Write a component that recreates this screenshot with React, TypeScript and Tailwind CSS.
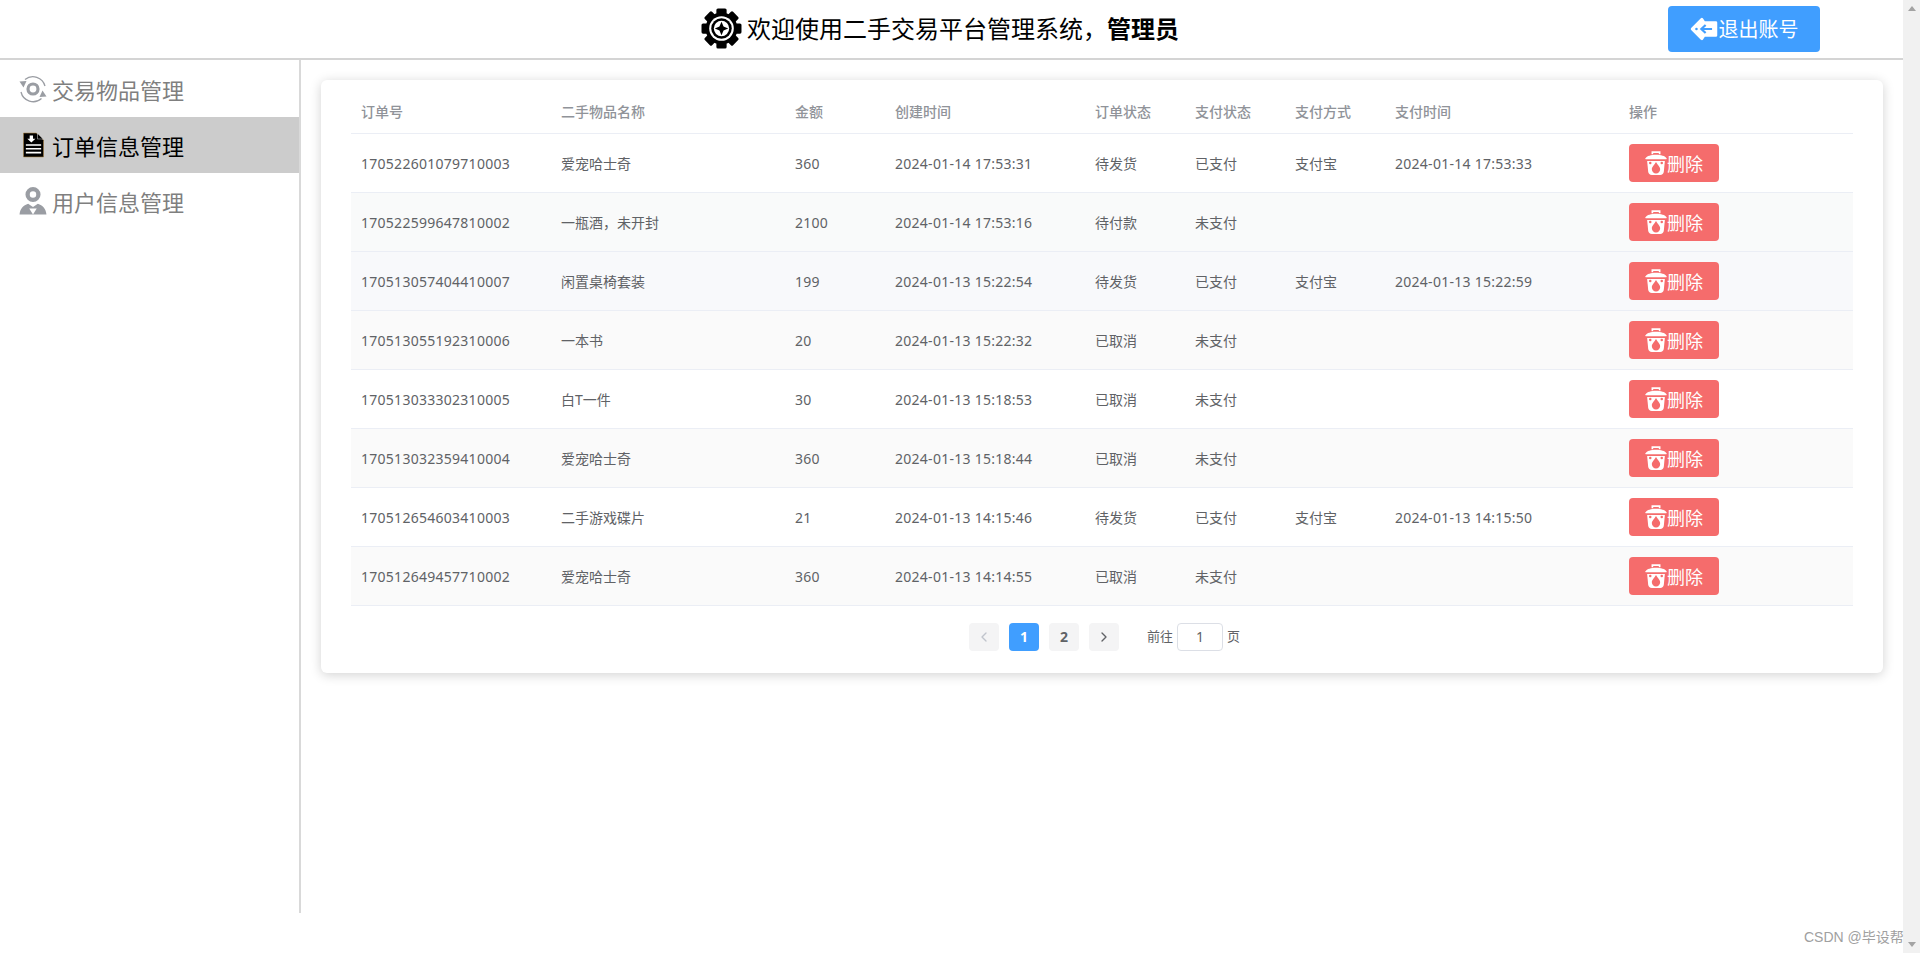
import { ChevronLeft, ChevronRight } from "lucide-react";

type Order = {
  no: string;
  name: string;
  price: string;
  created: string;
  status: string;
  pay: string;
  method?: string;
  paidAt?: string;
  bg?: string;
};

const orders: Order[] = [
  { no: "170522601079710003", name: "爱宠哈士奇", price: "360", created: "2024-01-14 17:53:31", status: "待发货", pay: "已支付", method: "支付宝", paidAt: "2024-01-14 17:53:33", bg: "bg-white" },
  { no: "170522599647810002", name: "一瓶酒，未开封", price: "2100", created: "2024-01-14 17:53:16", status: "待付款", pay: "未支付", bg: "bg-[#f9fafa]" },
  { no: "170513057404410007", name: "闲置桌椅套装", price: "199", created: "2024-01-13 15:22:54", status: "待发货", pay: "已支付", method: "支付宝", paidAt: "2024-01-13 15:22:59", bg: "bg-[#f8f9fb]" },
  { no: "170513055192310006", name: "一本书", price: "20", created: "2024-01-13 15:22:32", status: "已取消", pay: "未支付", bg: "bg-[#fafafa]" },
  { no: "170513033302310005", name: "白T一件", price: "30", created: "2024-01-13 15:18:53", status: "已取消", pay: "未支付", bg: "bg-white" },
  { no: "170513032359410004", name: "爱宠哈士奇", price: "360", created: "2024-01-13 15:18:44", status: "已取消", pay: "未支付", bg: "bg-[#fafafa]" },
  { no: "170512654603410003", name: "二手游戏碟片", price: "21", created: "2024-01-13 14:15:46", status: "待发货", pay: "已支付", method: "支付宝", paidAt: "2024-01-13 14:15:50", bg: "bg-white" },
  { no: "170512649457710002", name: "爱宠哈士奇", price: "360", created: "2024-01-13 14:14:55", status: "已取消", pay: "未支付", bg: "bg-[#fafafa]" },
];

const headers = ["订单号", "二手物品名称", "金额", "创建时间", "订单状态", "支付状态", "支付方式", "支付时间", "操作"];
const cols = "grid grid-cols-[200px_234px_100px_200px_100px_100px_100px_234px_234px]";

function GearIcon() {
  const teeth = [0, 45, 90, 135, 180, 225, 270, 315];
  return (
    <svg viewBox="0 0 40 40" className="h-[41px] w-[41px] shrink-0">
      {teeth.map((a) => (
        <rect key={a} x="15" y="0.5" width="10" height="8" rx="1.5" fill="#000" transform={`rotate(${a} 20 20)`} />
      ))}
      <circle cx="20" cy="20" r="15.5" fill="#000" />
      <circle cx="20" cy="20" r="12" fill="#fff" />
      <circle cx="20" cy="20" r="10" fill="#000" />
      <circle cx="20" cy="20" r="7.5" fill="#fff" />
      <path d="M20 13.5 L22 18 L26.5 20 L22 22 L20 26.5 L18 22 L13.5 20 L18 18 Z" fill="#000" />
    </svg>
  );
}

function EyeCycleIcon() {
  return (
    <svg viewBox="0 0 28 28" className="-ml-px h-7 w-7 shrink-0" fill="none" stroke="#9a9da3">
      <path d="M6 4.5 A12.5 12.5 0 0 1 26 11" strokeWidth="1.3" />
      <path d="M22.5 23.5 A12.5 12.5 0 0 1 2 17" strokeWidth="1.3" />
      <path d="M0.5 6.5 L7.5 6 L4.5 12.5 Z" fill="#9a9da3" stroke="none" />
      <path d="M27.5 21.5 L20.5 22 L23.5 15.5 Z" fill="#9a9da3" stroke="none" />
      <circle cx="14" cy="14" r="5" strokeWidth="3.2" />
    </svg>
  );
}

function DocIcon() {
  return (
    <svg viewBox="0 0 22 26" className="ml-[3px] h-[26px] w-[21px] shrink-0">
      <path d="M0.5 0.5 H14 L21.5 8 V25.5 H0.5 Z" fill="#000" stroke="#a8813f" strokeWidth="0.6" />
      <path d="M15 0.5 L21.5 7 H15 Z" fill="#ccc" />
      <path d="M15.5 1.5 L20.5 6.5 H15.5 Z" fill="#000" />
      <path d="M7 3 H10.5 V6.5 H13 L8.8 10.5 L4.5 6.5 H7 Z" fill="#fff" />
      <path d="M3 13 H19 M3 17 H19 M3 21 H19" stroke="#fff" strokeWidth="1.6" />
    </svg>
  );
}

function UserIcon() {
  return (
    <svg viewBox="0 0 26 26" className="-ml-px h-7 w-7 shrink-0">
      <circle cx="13" cy="7" r="5" fill="none" stroke="#9a9da3" strokeWidth="4" />
      <path d="M0.5 25.5 C1 20 4 17 8.5 15.5 L13 18.5 L17.5 15.5 C22 17 25 20 25.5 25.5 Z" fill="#9a9da3" />
      <path d="M9.5 20 H16.5 L13 25.5 Z" fill="#fff" />
    </svg>
  );
}

function BackIcon() {
  return (
    <svg viewBox="0 0 26 24" className="h-7 w-7 shrink-0">
      <path
        d="M2 12 L11 3 L13 6 H24 V18 H13 L11 21 Z"
        fill="#fff"
        stroke="#fff"
        strokeWidth="2.6"
        strokeLinejoin="round"
      />
      <path d="M20.5 12 H11 M14.5 8.2 L10.5 12 L14.5 15.8" fill="none" stroke="#409eff" strokeWidth="2" />
      <circle cx="6" cy="12" r="1.2" fill="#409eff" />
    </svg>
  );
}

function TrashIcon() {
  return (
    <svg viewBox="0 0 22 24" className="-mx-px h-[25px] w-6 shrink-0">
      <path d="M7.5 3 V1 H14.5 V3" fill="none" stroke="#fff" strokeWidth="1.6" />
      <path d="M1 7 C3 2.5 19 2.5 21 7 V8 H1 Z" fill="#fff" />
      <path d="M2.5 9.5 H19.5 L18.5 20 C18.3 22 17 23 15 23 H7 C5 23 3.7 22 3.5 20 Z" fill="#fff" />
      <path d="M11 10.5 C12.5 13.5 15 15 15 17.5 A4 4 0 0 1 7 17.5 C7 15 9.5 13.5 11 10.5 Z" fill="#f56c6c" />
      <circle cx="5.5" cy="11.5" r="1.2" fill="#f56c6c" />
      <circle cx="16.5" cy="11.5" r="1.2" fill="#f56c6c" />
    </svg>
  );
}

function NavItem({ label, icon, active }: { label: string; icon: React.ReactNode; active?: boolean }) {
  return (
    <div className={`flex h-14 items-center pl-5 text-[22px] ${active ? "bg-[#cccccc] text-black" : "text-[#7f7f7f]"}`}>
      <span className="flex w-[32px] justify-start">{icon}</span>
      <span className="pt-[3px]">{label}</span>
    </div>
  );
}

function Row({ order }: { order: Order }) {
  const num = "pl-[10px] pt-px tracking-[0.27px]";
  const txt = "pl-[10px] pt-px";
  return (
    <div className={`${cols} h-[59px] items-center border-b border-[#ebeef5] text-sm text-[#606266] ${order.bg}`}>
      <div className={num}>{order.no}</div>
      <div className={txt}>{order.name}</div>
      <div className={num}>{order.price}</div>
      <div className={num}>{order.created}</div>
      <div className={txt}>{order.status}</div>
      <div className={txt}>{order.pay}</div>
      <div className={txt}>{order.method}</div>
      <div className={num}>{order.paidAt}</div>
      <div className="pl-[10px]">
        <button className="flex h-[38px] w-[90px] items-center justify-center rounded bg-[#f56c6c] text-lg text-white">
          <TrashIcon />
          <span className="pt-px">删除</span>
        </button>
      </div>
    </div>
  );
}

export default function App() {
  return (
    <div className="flex h-[953px] w-[1920px] overflow-hidden bg-white font-['Noto_Sans','Noto_Sans_CJK_SC',sans-serif]">
      <div className="flex w-[1903px] flex-col">
        <header className="flex h-[60px] shrink-0 items-center border-b-2 border-[#d4d4d4] pb-px">
          <div className="ml-[701px] flex items-center gap-[5px] text-2xl text-black">
            <GearIcon />
            <span>
              欢迎使用二手交易平台管理系统，<b>管理员</b>
            </span>
          </div>
          <button className="ml-auto mr-[83px] flex h-[46px] w-[152px] items-center justify-center gap-px rounded bg-[#409eff] text-xl text-white">
            <BackIcon />
            <span className="pt-[2px]">退出账号</span>
          </button>
        </header>

        <div className="flex">
          <aside className="h-[853px] w-[301px] shrink-0 border-r-2 border-[#d9d9d9] pt-px">
            <NavItem label="交易物品管理" icon={<EyeCycleIcon />} />
            <NavItem label="订单信息管理" icon={<DocIcon />} active />
            <NavItem label="用户信息管理" icon={<UserIcon />} />
          </aside>

          <main className="flex-1 pl-5 pr-5 pt-5">
            <div className="h-[593px] rounded-md bg-white px-[30px] shadow-[0_2px_12px_0_rgba(0,0,0,0.18)]">
              <div className={`${cols} h-[54px] items-center border-b border-[#ebeef5] pt-[10px] text-sm font-medium text-[#909399]`}>
                {headers.map((h) => (
                  <div key={h} className="pl-[10px]">
                    {h}
                  </div>
                ))}
              </div>
              {orders.map((o) => (
                <Row key={o.no} order={o} />
              ))}
              <div className="ml-[5px] mt-[17px] flex items-center justify-center text-[13px] text-[#606266]">
                <span className="flex h-7 w-[30px] items-center justify-center rounded-sm bg-[#f4f4f5] text-[#c0c4cc]">
                  <ChevronLeft size={16} />
                </span>
                <span className="ml-[10px] flex h-7 w-[30px] items-center justify-center rounded-sm bg-[#409eff] text-sm font-bold text-white">1</span>
                <span className="ml-[10px] flex h-7 w-[30px] items-center justify-center rounded-sm bg-[#f4f4f5] text-sm font-bold">2</span>
                <span className="ml-[10px] flex h-7 w-[30px] items-center justify-center rounded-sm bg-[#f4f4f5]">
                  <ChevronRight size={16} />
                </span>
                <span className="ml-7">前往</span>
                <span className="mx-[4px] flex h-7 w-[46px] items-center justify-center rounded border border-[#dcdfe6] text-sm">1</span>
                <span>页</span>
              </div>
            </div>
          </main>
        </div>
      </div>

      <div className="flex w-[17px] shrink-0 flex-col items-center justify-between bg-[#f1f1f1] py-[6px]">
        <div className="h-0 w-0 border-x-[4px] border-b-[5px] border-x-transparent border-b-[#a3a3a3]" />
        <div className="h-0 w-0 border-x-[4px] border-t-[5px] border-x-transparent border-t-[#a3a3a3]" />
      </div>

      <div className="absolute left-[1804px] top-[927px] text-sm text-[#a0a0a0] font-['Liberation_Sans','Noto_Sans_CJK_SC',sans-serif]">CSDN @毕设帮</div>
    </div>
  );
}
